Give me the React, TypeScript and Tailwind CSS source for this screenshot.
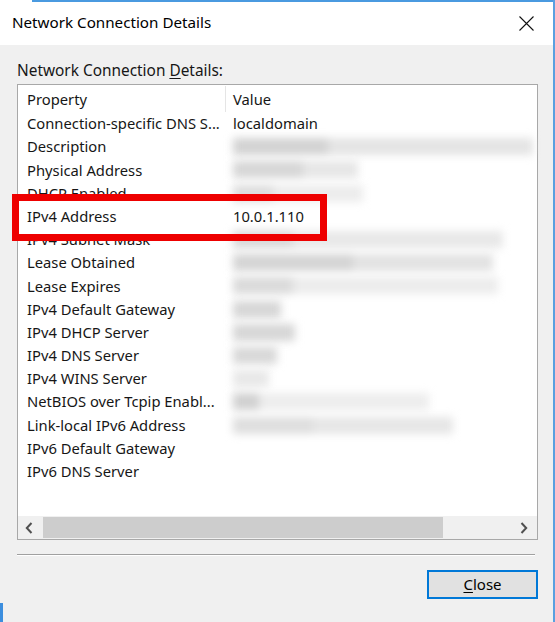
import React from "react";

type Seg = [number, string];
type Row = { p: string; v?: string; blur?: Seg[] };

const rows: Row[] = [
  { p: "Connection-specific DNS S...", v: "localdomain" },
  { p: "Description", blur: [[95, "#d2d2d2"], [205, "#e4e4e4"]] },
  { p: "Physical Address", blur: [[70, "#d6d6d6"], [55, "#e6e6e6"]] },
  { p: "DHCP Enabled", blur: [[40, "#dcdcdc"], [90, "#ececec"]] },
  { p: "IPv4 Address", v: "10.0.1.110" },
  { p: "IPv4 Subnet Mask", blur: [[60, "#d8d8d8"], [210, "#e8e8e8"]] },
  { p: "Lease Obtained", blur: [[120, "#d4d4d4"], [140, "#e2e2e2"]] },
  { p: "Lease Expires", blur: [[60, "#dadada"], [205, "#ececec"]] },
  { p: "IPv4 Default Gateway", blur: [[48, "#d6d6d6"]] },
  { p: "IPv4 DHCP Server", blur: [[62, "#d6d6d6"]] },
  { p: "IPv4 DNS Server", blur: [[44, "#d8d8d8"]] },
  { p: "IPv4 WINS Server", blur: [[36, "#e8e8e8"]] },
  { p: "NetBIOS over Tcpip Enabl...", blur: [[26, "#d0d0d0"], [170, "#ededed"]] },
  { p: "Link-local IPv6 Address", blur: [[80, "#dedede"], [140, "#e6e6e6"]] },
  { p: "IPv6 Default Gateway" },
  { p: "IPv6 DNS Server" },
];

function Blur({ segs }: { segs: Seg[] }) {
  return (
    <div className="flex h-[17px] blur-[4px]">
      {segs.map(([w, c], i) => (
        <div key={i} style={{ width: w, backgroundColor: c }} />
      ))}
    </div>
  );
}

export default function App() {
  return (
    <div
      className="relative w-[555px] h-[622px] overflow-hidden bg-[#f0f0f0] text-[#161616]"
      style={{ fontFamily: '"Noto Sans", "Open Sans", sans-serif' }}
    >
      {/* window frame */}
      <div className="flex h-full flex-col border-r-2 border-[#5aa0e0]">
        {/* title bar */}
        <div className="relative flex h-[45px] shrink-0 items-center justify-between bg-white pl-[12px] pr-[19px]">
          <div className="absolute left-[32px] right-0 top-0 h-[2px] bg-[#4a9ae0]" />
          <span className="text-[15.2px] leading-none text-black">Network Connection Details</span>
          <svg width="15" height="15" viewBox="0 0 15 15" className="mt-[1px]">
            <path d="M0.5 0.5 L14.5 14.5 M14.5 0.5 L0.5 14.5" stroke="#111" strokeWidth="1.1" />
          </svg>
        </div>

        {/* body */}
        <div className="flex flex-1 flex-col pl-[17px] pr-[15px]">
          <div className="mt-[16px] h-[20px] text-[15.4px] leading-[20px]">
            Network Connection <span className="underline underline-offset-2">D</span>etails:
          </div>

          {/* list box */}
          <div className="mt-[3px] flex h-[456px] flex-col border border-[#a8a8a8] bg-white">
            <div className="flex-1 pt-[1px]">
              {/* header */}
              <div className="flex h-[26px] items-center text-[14.75px]">
                <div className="w-[207px] pl-[9px]">Property</div>
                <div className="h-full w-px bg-[#e5e5e5]" />
                <div className="pl-[7px]">Value</div>
              </div>
              {rows.map((r) => (
                <div key={r.p} className="flex h-[23.2px] items-center text-[14.75px] leading-none">
                  <div className="w-[207px] whitespace-nowrap pl-[9px]">{r.p}</div>
                  <div className="w-px" />
                  <div className="pl-[7px]">
                    {r.v ? <span>{r.v}</span> : r.blur ? <Blur segs={r.blur} /> : null}
                  </div>
                </div>
              ))}
            </div>

            {/* horizontal scrollbar */}
            <div className="flex h-[23px] items-center bg-[#f0f0f0]">
              <div className="flex h-full w-[22px] items-center justify-center">
                <svg width="8" height="12" viewBox="0 0 8 12">
                  <path d="M6.5 1 L1.8 6 L6.5 11" fill="none" stroke="#505050" strokeWidth="2" />
                </svg>
              </div>
              <div className="ml-[3px] h-[21px] w-[400px] bg-[#cdcdcd]" />
              <div className="flex-1" />
              <div className="flex h-full w-[26px] items-center justify-center">
                <svg width="8" height="12" viewBox="0 0 8 12">
                  <path d="M1.5 1 L6.2 6 L1.5 11" fill="none" stroke="#505050" strokeWidth="2" />
                </svg>
              </div>
            </div>
          </div>

          {/* separator */}
          <div className="mt-[14px] mr-[3px] h-[1px] bg-[#a0a0a0]" />
          <div className="mr-[3px] h-[1px] bg-white" />

          {/* buttons */}
          <div className="mt-[14px] flex justify-end">
            <button className="flex h-[29px] w-[111px] items-center justify-center border-2 border-[#0078d7] bg-[#e1e1e1] text-[15px] leading-none text-black">
              <span className="underline underline-offset-2">C</span>lose
            </button>
          </div>
        </div>
      </div>

      {/* bottom-left blue edge of window behind */}
      <div className="absolute bottom-0 left-0 h-[19px] w-[3px] bg-[#3c8ede]" />

      {/* red highlight box */}
      <div className="absolute left-[12px] top-[194px] h-[47px] w-[315px] border-[7px] border-[#ee0000]" />
    </div>
  );
}
